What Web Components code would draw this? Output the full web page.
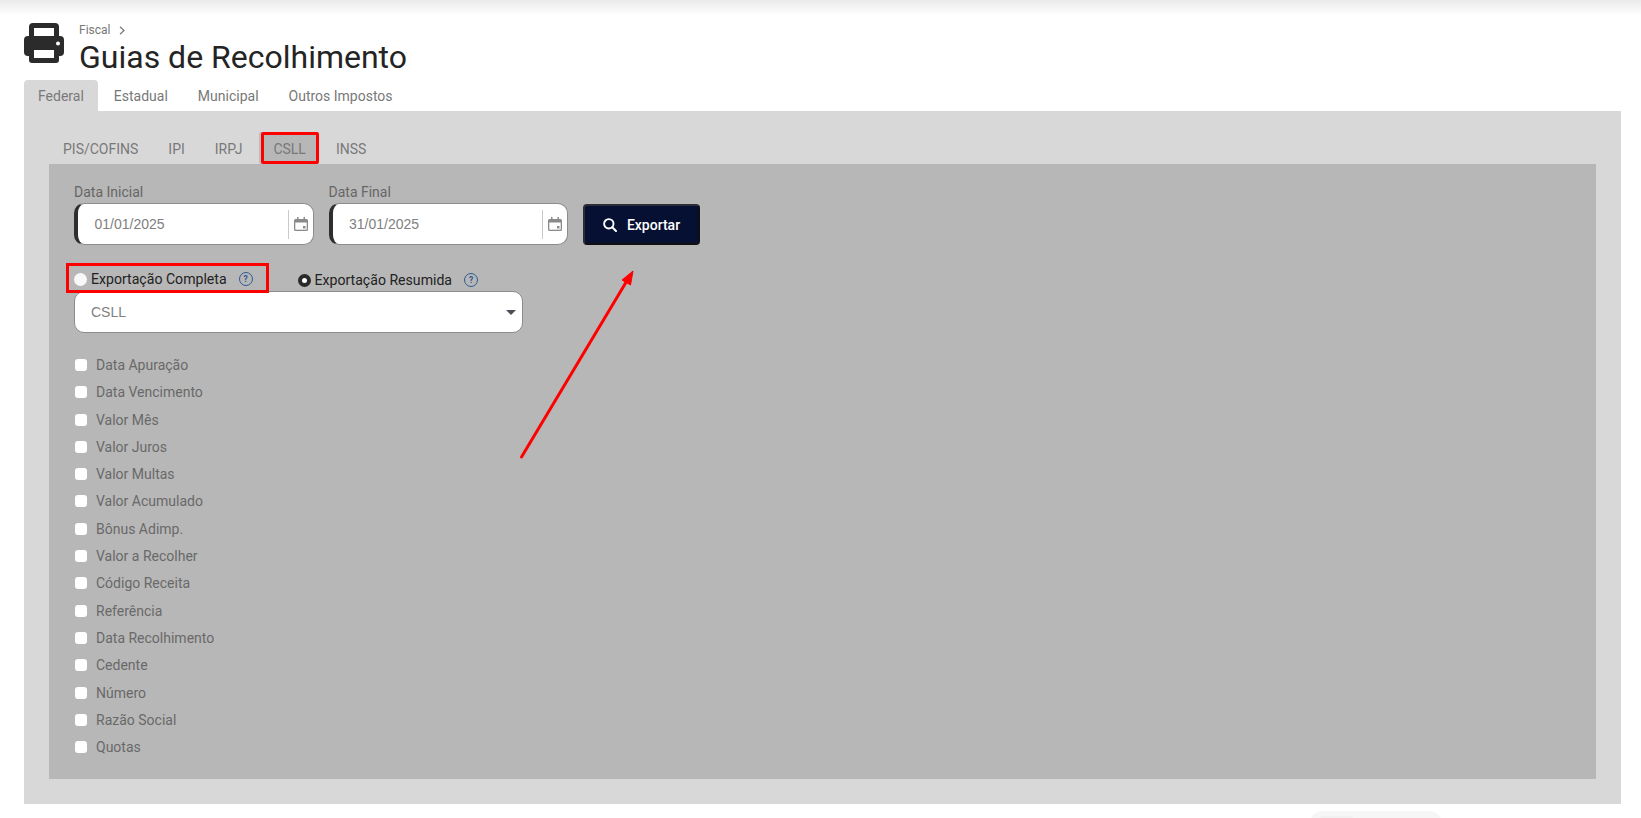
<!DOCTYPE html>
<html lang="pt-BR">
<head>
<meta charset="utf-8">
<title>Guias de Recolhimento</title>
<style>
  html, body { margin: 0; height: 818px; overflow: hidden; background: #fff; }
  body { font-family: Roboto, "Liberation Sans", sans-serif; }
</style>
</head>
<body>
<guias-page>
  <page-header section="Fiscal" title="Guias de Recolhimento"></page-header>
  <tab-bar>
    <tab-item active>Federal</tab-item>
    <tab-item>Estadual</tab-item>
    <tab-item>Municipal</tab-item>
    <tab-item>Outros Impostos</tab-item>
  </tab-bar>
  <outer-panel>
    <tab-bar slot="tabs">
      <tab-item>PIS/COFINS</tab-item>
      <tab-item>IPI</tab-item>
      <tab-item>IRPJ</tab-item>
      <tab-item marked>CSLL</tab-item>
      <tab-item>INSS</tab-item>
    </tab-bar>
    <inner-panel>
      <form-row>
        <date-field label="Data Inicial" value="01/01/2025"></date-field>
        <date-field label="Data Final" value="31/01/2025"></date-field>
        <export-button>Exportar</export-button>
      </form-row>
      <radio-row>
        <radio-option marked>Exportação Completa</radio-option>
        <radio-option checked>Exportação Resumida</radio-option>
      </radio-row>
      <select-box>CSLL</select-box>
      <check-list>
        <check-item>Data Apuração</check-item>
        <check-item>Data Vencimento</check-item>
        <check-item>Valor Mês</check-item>
        <check-item>Valor Juros</check-item>
        <check-item>Valor Multas</check-item>
        <check-item>Valor Acumulado</check-item>
        <check-item>Bônus Adimp.</check-item>
        <check-item>Valor a Recolher</check-item>
        <check-item>Código Receita</check-item>
        <check-item>Referência</check-item>
        <check-item>Data Recolhimento</check-item>
        <check-item>Cedente</check-item>
        <check-item>Número</check-item>
        <check-item>Razão Social</check-item>
        <check-item>Quotas</check-item>
      </check-list>
    </inner-panel>
  </outer-panel>
</guias-page>

<script>
// small helper, every element is just a template + open shadow root
function define(name, html, setup) {
  const template = document.createElement('template');
  template.innerHTML = html;
  customElements.define(name, class extends HTMLElement {
    constructor() {
      super();
      this.attachShadow({ mode: 'open' }).appendChild(template.content.cloneNode(true));
    }
    connectedCallback() {
      if (setup) setup(this, this.shadowRoot);
    }
  });
}

define('guias-page', `
  <style>
    :host { display: block; position: relative; height: 818px; overflow: hidden; padding: 12px 20px 0 24px; box-sizing: border-box; }
    .shade { position: absolute; left: 0; right: 0; top: 0; height: 16px; background: linear-gradient(#ebebeb, #fff); }
    .arrow { position: absolute; left: 0; top: 0; pointer-events: none; }
    .floating { position: absolute; left: 1311px; top: 811px; width: 130px; height: 30px; background: #f6f6f6; border-radius: 10px; }
    .floating i { position: absolute; left: 7px; top: 5px; width: 37px; height: 20px; background: #f1f1f1; border-radius: 6px; }
  </style>
  <div class="shade"></div>
  <slot></slot>
  <div class="floating"><i></i></div>
  <svg class="arrow" width="1641" height="818" viewBox="0 0 1641 818">
    <path d="M521.5 457 L628 279" stroke="#f00" stroke-width="3" stroke-linecap="round" fill="none"/>
    <path d="M633 271 L630.5 285 L622 280 Z" fill="#f00" stroke="#f00" stroke-width="1"/>
  </svg>
`);

define('page-header', `
  <style>
    :host { display: flex; height: 68px; color: #222; }
    svg { width: 40px; height: 40px; margin: 11px 15px 0 0; flex: none; }
    .crumb { display: flex; align-items: center; gap: 9px; height: 14px; margin-top: 11px; font-size: 12px; color: #777; }
    .crumb svg { width: 6px; height: 9px; margin: 0; }
    h1 { margin: 2px 0 0; font-size: 32px; line-height: 36px; font-weight: 400; color: #242424; }
  </style>
  <svg viewBox="0 0 40 40">
    <path fill="#2b2b2b" fill-rule="evenodd" d="M9 0H31Q35 0 35 4V14H30V5H10V14H5V4Q5 0 9 0Z"/>
    <rect y="13" width="40" height="20" rx="4" fill="#2b2b2b"/>
    <path fill="#2b2b2b" d="M5 27H35V37Q35 40 32 40H8Q5 40 5 37Z"/>
    <rect x="10" y="27" width="20" height="8" fill="#fff"/>
    <circle cx="34" cy="20.5" r="2" fill="#fff"/>
  </svg>
  <div>
    <div class="crumb"><span class="section"></span>
      <svg viewBox="0 0 6 9"><path d="M1 .8 5 4.500 1 8.200" fill="none" stroke="#777" stroke-width="1.200"/></svg>
    </div>
    <h1></h1>
  </div>
`, (el, root) => {
  root.querySelector('.section').textContent = el.getAttribute('section');
  root.querySelector('h1').textContent = el.getAttribute('title');
});

define('tab-bar', `
  <style>
    :host { display: flex; gap: 2px; height: 31px; align-items: stretch; }
    :host([slot]) { height: 32px; }
    :host([slot]) ::slotted(tab-item) { padding-top: 2px; }
  </style>
  <slot></slot>
`);

define('tab-item', `
  <style>
    :host { display: flex; align-items: center; padding: 0 14px; font-size: 14px; color: #787878; border-radius: 4px 4px 0 0; box-sizing: border-box; }
    :host([active]) { background: #d8d8d8; }
    :host([marked]) { background: #b7b7b7; border: 3px solid #f00; border-radius: 2px; padding: 0 10px 0 9px; margin-left: 3px; margin-right: 1px; box-shadow: -2px 0 0 #bdbdbd; }
  </style>
  <slot></slot>
`);

define('outer-panel', `
  <style>
    :host { display: block; height: 693px; box-sizing: border-box; width: 1597px; padding: 21px 25px 25px; background: #d8d8d8; }
  </style>
  <slot name="tabs"></slot>
  <slot></slot>
`);

define('inner-panel', `
  <style>
    :host { display: block; height: 615px; box-sizing: border-box; padding: 21px 25px 0; background: #b7b7b7; }
  </style>
  <slot></slot>
`);

define('form-row', `
  <style>
    :host { display: flex; align-items: flex-end; gap: 15px; height: 60px; }
  </style>
  <slot></slot>
`);

define('date-field', `
  <style>
    :host { display: block; width: 239.500px; }
    label { display: block; height: 19px; font-size: 14px; line-height: 17px; color: #666; }
    .box { display: flex; align-items: center; height: 42px; box-sizing: border-box; background: #fff; border: 1px solid #8c8c8c; border-left: 4px solid #2e2e2e; border-radius: 10px; }
    .value { flex: 1; padding-left: 16.500px; font: 14px "Liberation Sans", sans-serif; color: #808080; }
    .cal { display: flex; align-items: center; height: 29px; padding: 0 5px 0 5px; border-left: 1px solid #c9c9c9; }
    svg { width: 14px; height: 14px; display: block; }
  </style>
  <label></label>
  <div class="box">
    <span class="value"></span>
    <span class="cal">
      <svg viewBox="0 0 14 14">
        <path fill="#8a8a8a" d="M3 0h1.500v2h5V0H11v2h1.500Q14 2 14 3.500v9q0 1.500-1.500 1.500h-11Q0 14 0 12.500v-9Q0 2 1.500 2H3Z"/>
        <rect x="1.300" y="5.500" width="11.400" height="7.200" fill="#fff"/>
        <rect x="9" y="9" width="2.500" height="2.500" fill="#8a8a8a"/>
      </svg>
    </span>
  </div>
`, (el, root) => {
  root.querySelector('label').textContent = el.getAttribute('label');
  root.querySelector('.value').textContent = el.getAttribute('value');
});

define('export-button', `
  <style>
    :host { display: flex; align-items: center; justify-content: center; gap: 10px; width: 117px; height: 41px; box-sizing: border-box; background: #061033; color: #fff; font-size: 14px; font-weight: 500; border: 2px solid #2c2c34; border-right-color: #101010; border-bottom-color: #101010; border-radius: 4px; }
    svg { width: 14px; height: 14px; }
  </style>
  <svg viewBox="0 0 14 14"><circle cx="5.800" cy="5.800" r="4.700" fill="none" stroke="#fff" stroke-width="1.900"/><path d="M9.300 9.300 13 13" stroke="#fff" stroke-width="2" stroke-linecap="round"/></svg>
  <slot></slot>
`);

define('radio-row', `
  <style>
    :host { display: flex; gap: 28.500px; margin: 18px 0 -2px -8px; position: relative; z-index: 1; height: 30px; }
  </style>
  <slot></slot>
`);

define('radio-option', `
  <style>
    :host { display: flex; align-items: center; box-sizing: border-box; height: 30px; padding: 4px 0 0 0; font-size: 14.100px; color: #222; white-space: nowrap; }
    :host([marked]) { width: 203px; border: 3px solid #f00; padding: 2px 0 0 5px; }
    .dot { width: 13px; height: 13px; box-sizing: border-box; border-radius: 50%; background: #f8f8f8; margin-right: 4px; flex: none; }
    :host([checked]) .dot { background: #fff; border: 4px solid #2a2a2a; }
    .help { width: 14px; height: 14px; box-sizing: border-box; margin-left: 12px; border: 1px solid #2f5a92; border-radius: 50%; color: #2f5a92; font-size: 8.500px; font-weight: 700; line-height: 12px; text-align: center; }
  </style>
  <span class="dot"></span><slot></slot><span class="help">?</span>
`);

define('select-box', `
  <style>
    :host { display: flex; align-items: center; justify-content: space-between; width: 449px; height: 42px; box-sizing: border-box; padding: 0 6px 0 16px; background: #fff; border: 1px solid #8c8c8c; border-radius: 10px; font: 14px "Liberation Sans", sans-serif; color: #808080; }
    i { border: 5.500px solid transparent; border-top: 5.500px solid #4a4f57; border-bottom: 0; }
  </style>
  <slot></slot><i></i>
`);

define('check-list', `
  <style>
    :host { display: block; margin-top: 18.300px; }
  </style>
  <slot></slot>
`);

define('check-item', `
  <style>
    :host { display: flex; align-items: center; height: 27.300px; font-size: 14px; color: #696969; }
    i { width: 12px; height: 12px; margin: 0 9px 0 1px; background: #fff; border-radius: 3px; flex: none; }
  </style>
  <i></i><slot></slot>
`);
</script>
</body>
</html>
